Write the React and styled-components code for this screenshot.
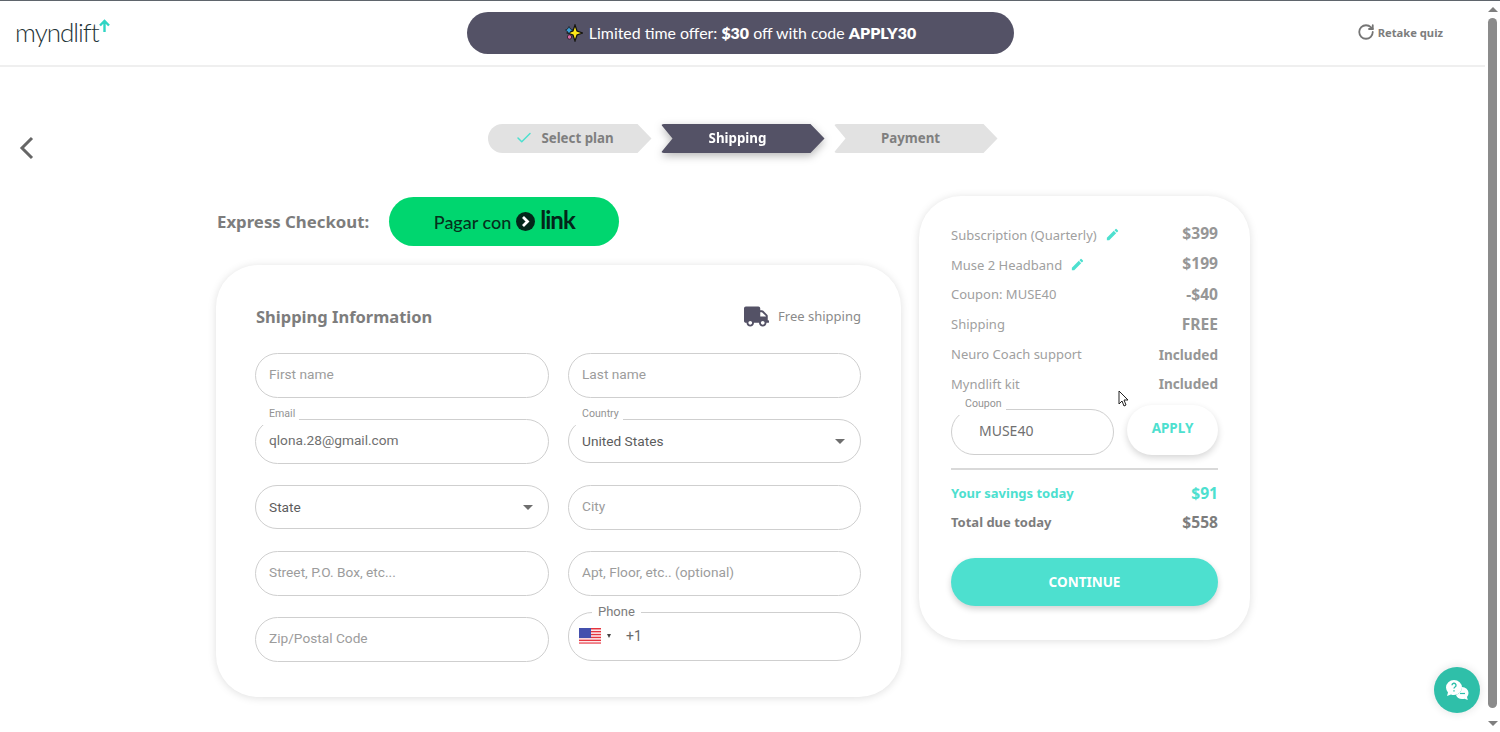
import React from "react";
import styled, { createGlobalStyle } from "styled-components";
import { Check, RotateCw } from "lucide-react";
import { FaTruck } from "react-icons/fa";
import { MdEdit } from "react-icons/md";

const UI_FONT = `"Noto Sans", Lato, sans-serif`;
const FIELD_FONT = `Roboto, "Liberation Sans", sans-serif`;

const GlobalStyle = createGlobalStyle`
  html, body {
    margin: 0;
    height: 100%;
    overflow: hidden;
    background: #fff;
  }
  * {
    box-sizing: border-box;
  }
`;

const Screen = styled.div`
  display: flex;
  height: 732px;
  border-top: 1px solid #5f656c;
  font-family: ${UI_FONT};
  position: relative;
  overflow: hidden;
`;

const Page = styled.div`
  flex: 1;
  min-width: 0;
`;

const Header = styled.header`
  height: 66px;
  border-bottom: 2px solid #efefef;
  display: grid;
  grid-template-columns: 467px 547px 1fr;
  align-items: center;
`;

const Logo = styled.div`
  display: flex;
  align-items: flex-start;
  padding-left: 15px;
  margin-top: -2px;
  color: #1f3538;
  font-family: Lato, sans-serif;
  font-size: 26px;
  font-weight: 300;
  letter-spacing: -1px;
  line-height: 30px;
`;

const LogoArrow = styled.svg`
  width: 11px;
  height: 14px;
  margin-top: 2px;
`;

const Promo = styled.div`
  height: 42px;
  margin-top: -1px;
  border-radius: 21px;
  background: #545266;
  color: #fff;
  display: flex;
  align-items: center;
  justify-content: center;
  gap: 6px;
  font-family: Lato, sans-serif;
  font-size: 15.9px;

  b {
    font-weight: 800;
  }
`;

const Retake = styled.div`
  justify-self: end;
  margin: -2px 42px 0 0;
  display: flex;
  align-items: center;
  gap: 3px;
  color: #7d7d7d;
  font-size: 11.2px;
  font-weight: 700;
`;

const StepperRow = styled.div`
  display: grid;
  grid-template-columns: 1fr auto 1fr;
  padding-top: 57px;
`;

const Back = styled.svg`
  width: 16px;
  height: 24px;
  margin: 12px 0 0 19px;
`;

const Stepper = styled.div`
  display: flex;
  gap: 9px;
`;

const StepShadow = styled.div`
  filter: ${(p) => (p.$active ? "drop-shadow(0 3px 4px rgba(0,0,0,.28))" : "none")};
`;

const Step = styled.div`
  width: 164px;
  height: 29px;
  padding: 0 10px 2px 0;
  display: flex;
  align-items: center;
  justify-content: center;
  gap: 8px;
  font-size: 13.3px;
  font-weight: 700;
  background: ${(p) => (p.$active ? "#545266" : "#e2e2e2")};
  color: ${(p) => (p.$active ? "#fff" : "#7f7f7f")};
  border-radius: ${(p) => (p.$first ? "15px 0 0 15px" : "3px 0 0 3px")};
  clip-path: ${(p) =>
    p.$first
      ? "polygon(0 0, calc(100% - 14px) 0, 100% 50%, calc(100% - 14px) 100%, 0 100%)"
      : "polygon(0 0, calc(100% - 14px) 0, 100% 50%, calc(100% - 14px) 100%, 0 100%, 12px 50%)"};
`;

const Checkout = styled.main`
  display: grid;
  grid-template-columns: 685px 331px;
  column-gap: 18px;
  align-items: start;
  padding: 36px 0 0 216px;
`;

const Express = styled.div`
  height: 49px;
  margin-top: 1px;
  display: flex;
  align-items: center;
  gap: 20px;
`;

const ExpressLabel = styled.span`
  margin-left: 1px;
  color: #7d7d7d;
  font-size: 16.8px;
  font-weight: 700;
`;

const LinkButton = styled.div`
  width: 230px;
  height: 49px;
  border-radius: 25px;
  background: #00d66f;
  color: #06301c;
  display: flex;
  align-items: center;
  justify-content: center;
  gap: 5px;
  font-family: Lato, sans-serif;
  font-size: 18px;
  font-weight: 500;
`;

const LinkWord = styled.span`
  color: #03261a;
  font-size: 24px;
  font-weight: 700;
  letter-spacing: -1px;
  line-height: 24px;
  margin-top: -3px;
`;

const Card = styled.section`
  background: #fff;
  border-radius: 42px;
  box-shadow: 0 1px 8px rgba(0, 0, 0, 0.13);
`;

const ShippingCard = styled(Card)`
  height: 432px;
  margin-top: 19px;
  padding: 39px 40px 0;
`;

const CardHead = styled.div`
  height: 24px;
  display: flex;
  justify-content: space-between;
  align-items: center;
`;

const CardTitle = styled.h2`
  margin: 0;
  color: #7d7d7d;
  font-size: 16.5px;
  font-weight: 700;
`;

const FreeShipping = styled.div`
  display: flex;
  align-items: center;
  gap: 9px;
  color: #8a8a8a;
  font-size: 13px;
`;

const FormGrid = styled.div`
  display: grid;
  grid-template-columns: 294px 293px;
  grid-auto-rows: 45px;
  column-gap: 19px;
  row-gap: 21px;
  margin: 25px 0 0 -1px;
  align-items: start;
`;

const Field = styled.div`
  position: relative;
  height: ${(p) => p.$h || 45}px;
  margin-top: ${(p) => p.$shift || 0}px;
  border: 1px solid #cfcfcf;
  border-radius: 24px;
  display: flex;
  align-items: center;
  padding: 0 13px;
  background: #fff;
`;

const Input = styled.input`
  width: 100%;
  border: 0;
  outline: 0;
  padding: 0 0 4px;
  background: transparent;
  color: #6f6f6f;
  font-family: ${FIELD_FONT};
  font-size: 13.7px;

  &::placeholder {
    color: #9c9c9c;
    opacity: 1;
  }
`;

const FloatLabel = styled.label`
  position: absolute;
  left: -1px;
  top: -13px;
  height: 18px;
  padding: 1px 4px 0 14px;
  background: #fff;
  color: #939393;
  font-family: ${FIELD_FONT};
  font-size: 10.6px;
  line-height: 11px;
`;

const PhoneLabel = styled.label`
  position: absolute;
  left: 23px;
  top: -8px;
  padding: 0 6px;
  background: #fff;
  color: #7c7c7c;
  font-family: ${FIELD_FONT};
  font-size: 13px;
  line-height: 14px;
`;

const SelectBox = styled.div`
  width: 100%;
  display: flex;
  justify-content: space-between;
  align-items: center;
  color: #5c5c5c;
  font-family: ${FIELD_FONT};
  font-size: 13.7px;
`;

const Caret = styled.span`
  width: 0;
  height: 0;
  margin-right: 2px;
  border-left: 5px solid transparent;
  border-right: 5px solid transparent;
  border-top: 5px solid #6e6e6e;
`;

const PhoneRow = styled.div`
  display: flex;
  align-items: center;
  color: #6a6a6a;
  font-family: ${FIELD_FONT};
  font-size: 14px;
  margin: 0 0 1px -3px;
`;

const MiniCaret = styled.span`
  width: 0;
  height: 0;
  margin: 0 15px 0 6px;
  border-left: 2.5px solid transparent;
  border-right: 2.5px solid transparent;
  border-top: 4px solid #444;
`;

const SummaryCard = styled(Card)`
  height: 444px;
  padding: 24px 32px 0;
`;

const Line = styled.div`
  height: 29.8px;
  display: flex;
  align-items: center;
  justify-content: space-between;
  color: #a0a0a0;
  font-size: 13px;
`;

const LineLabel = styled.span`
  display: flex;
  align-items: center;
  gap: 8px;
`;

const Amount = styled.span`
  color: #969696;
  font-size: ${(p) => (p.$word ? 13.6 : 15.6)}px;
  font-weight: 700;
  margin-top: ${(p) => (p.$raised ? -4 : 0)}px;
`;

const Pen = styled(MdEdit)`
  color: #4de0cf;
  font-size: 15px;
`;

const CouponRow = styled.div`
  display: flex;
  justify-content: space-between;
  align-items: flex-end;
  margin-top: 4px;
  height: 52px;
`;

const CouponField = styled(Field)`
  width: 163px;
  height: 46px;
  padding: 0 27px;
`;

const CouponInput = styled(Input)`
  padding-bottom: 2px;
  font-family: ${UI_FONT};
  color: #707070;
  font-size: 14px;
`;

const ApplyButton = styled.button`
  width: 91px;
  height: 50px;
  border: 0;
  border-radius: 25px;
  background: #fff;
  box-shadow: 0 3px 7px rgba(0, 0, 0, 0.16);
  color: #4de0cf;
  font-family: ${UI_FONT};
  font-size: 13.5px;
  font-weight: 700;
  padding: 0 0 4px;
`;

const Divider = styled.hr`
  height: 2px;
  margin: 13px 0 8px;
  border: 0;
  background: #d9d9d9;
`;

const TotalLine = styled(Line)`
  color: ${(p) => p.$color};
  font-weight: 700;
  font-size: 13px;

  ${Amount} {
    color: ${(p) => p.$color};
  }
`;

const ContinueButton = styled.button`
  display: block;
  width: 267px;
  height: 48px;
  margin-top: 21px;
  border: 0;
  border-radius: 24px;
  background: #4de0cf;
  box-shadow: 0 3px 6px rgba(0, 0, 0, 0.18);
  color: #fff;
  font-family: ${UI_FONT};
  font-size: 13.5px;
  font-weight: 700;
`;

const ScrollBar = styled.div`
  width: 15px;
  display: flex;
  flex-direction: column;
  align-items: center;
  background: #fff;
`;

const ScrollArrow = styled.span`
  width: 0;
  height: 0;
  margin: ${(p) => (p.$up ? "6px 0" : "13px 0 0")};
  border-left: 5px solid transparent;
  border-right: 5px solid transparent;
  ${(p) => (p.$up ? "border-bottom" : "border-top")}: 5px solid #7f7f7f;
`;

const ScrollThumb = styled.div`
  width: 9px;
  height: 690px;
  flex: none;
  border-radius: 5px;
  background: #8b8b8b;
`;

const ChatButton = styled.div`
  position: absolute;
  left: 1434px;
  top: 666px;
  width: 46px;
  height: 46px;
  border-radius: 50%;
  background: #2fbfa9;
  box-shadow: 0 0 10px rgba(0, 0, 0, 0.12);
  display: flex;
  align-items: center;
  justify-content: center;
`;

const Cursor = styled.svg`
  position: absolute;
  left: 1118px;
  top: 389px;
  width: 11px;
  height: 17px;
`;

const Sparkles = () => (
  <svg width="18" height="18" viewBox="0 0 18 18">
    <path d="M10 1 L12 7 L17.5 9 L12 11 L10 17 L8 11 L2.5 9 L8 7 Z" fill="#ffe81a" stroke="#111" strokeWidth="1.2" />
    <path d="M4 2.5 L5.5 5 L8 6 L5.5 7.5 L4 10 L2.5 7.5 L0.5 6 L2.5 5 Z" fill="#3aa0d8" stroke="#111" strokeWidth=".7" />
    <circle cx="4.5" cy="13" r="2.2" fill="#d86aa8" stroke="#111" strokeWidth=".7" />
  </svg>
);

const UsFlag = () => (
  <svg width="22" height="16" viewBox="0 0 22 16">
    <rect width="22" height="16" fill="#fff" />
    {[0, 1, 2, 3, 4, 5].map((i) => (
      <rect key={i} y={i * 2.9} width="22" height="1.5" fill="#e5343f" />
    ))}
    <rect y="14.6" width="22" height="1.4" fill="#f08089" />
    <rect width="12" height="10" fill="#4450ad" />
  </svg>
);

const ChatIcon = () => (
  <svg width="25" height="22" viewBox="0 0 25 22">
    <path d="M9 1a8 7.5 0 0 1 8 7.5 8 7.5 0 0 1-8 7.5 8 8 0 0 1-3-.5L2 17l1-3.6A7.5 7.5 0 0 1 1 8.5 8 7.5 0 0 1 9 1z" fill="#fff" />
    <path d="M17 8a6.5 6 0 0 1 6.5 6 6 6 0 0 1-1.5 4l.8 3-3.3-1.3a7 7 0 0 1-2.5.3 6.5 6 0 0 1-6-4 9 9 0 0 0 6-8z" fill="#fff" />
    <path d="M7 6.3a2 2 0 1 1 3 1.7c-.7.4-1 .8-1 1.5M9 11.2v1.2" fill="none" stroke="#2fbfa9" strokeWidth="1.4" />
    <path d="M15 14.5h5" stroke="#2fbfa9" strokeWidth="1.2" />
  </svg>
);

const items = [
  { label: "Subscription (Quarterly)", value: "$399", edit: true },
  { label: "Muse 2 Headband", value: "$199", edit: true },
  { label: "Coupon: MUSE40", value: "-$40" },
  { label: "Shipping", value: "FREE" },
  { label: "Neuro Coach support", value: "Included" },
  { label: "Myndlift kit", value: "Included" },
];

export default function App() {
  return (
    <>
      <GlobalStyle />
      <Screen>
        <Page>
          <Header>
            <Logo>
              myndlift
              <LogoArrow viewBox="0 0 11 14">
                <path d="M5.5 13V2M1 6.5l4.5-4.5L10 6.5" fill="none" stroke="#2fd5c4" strokeWidth="2.4" />
              </LogoArrow>
            </Logo>
            <Promo>
              <Sparkles />
              <span>
                Limited time offer: <b>$30</b> off with code <b>APPLY30</b>
              </span>
            </Promo>
            <Retake>
              <RotateCw size={18} color="#757575" strokeWidth={2.4} />
              Retake quiz
            </Retake>
          </Header>

          <StepperRow>
            <Back viewBox="0 0 16 24">
              <path d="M13 2 L3 12 L13 22" fill="none" stroke="#666" strokeWidth="3" />
            </Back>
            <Stepper>
              <StepShadow>
                <Step $first>
                  <Check size={18} color="#4de0cf" strokeWidth={2} />
                  Select plan
                </Step>
              </StepShadow>
              <StepShadow $active>
                <Step $active>Shipping</Step>
              </StepShadow>
              <StepShadow>
                <Step>Payment</Step>
              </StepShadow>
            </Stepper>
          </StepperRow>

          <Checkout>
            <div>
              <Express>
                <ExpressLabel>Express Checkout:</ExpressLabel>
                <LinkButton>
                  Pagar con
                  <svg width="19" height="19" viewBox="0 0 19 19">
                    <circle cx="9.5" cy="9.5" r="9.5" fill="#03261a" />
                    <path d="M7 5l4.5 4.5L7 14" fill="none" stroke="#fff" strokeWidth="2.8" />
                  </svg>
                  <LinkWord>link</LinkWord>
                </LinkButton>
              </Express>

              <ShippingCard>
                <CardHead>
                  <CardTitle>Shipping Information</CardTitle>
                  <FreeShipping>
                    <FaTruck size={25} color="#545266" />
                    Free shipping
                  </FreeShipping>
                </CardHead>
                <FormGrid>
                  <Field>
                    <Input placeholder="First name" />
                  </Field>
                  <Field>
                    <Input placeholder="Last name" />
                  </Field>
                  <Field>
                    <FloatLabel>Email</FloatLabel>
                    <Input defaultValue="qlona.28@gmail.com" />
                  </Field>
                  <Field $h={44}>
                    <FloatLabel>Country</FloatLabel>
                    <SelectBox>
                      United States
                      <Caret />
                    </SelectBox>
                  </Field>
                  <Field $h={44}>
                    <SelectBox>
                      State
                      <Caret />
                    </SelectBox>
                  </Field>
                  <Field>
                    <Input placeholder="City" />
                  </Field>
                  <Field>
                    <Input placeholder="Street, P.O. Box, etc..." />
                  </Field>
                  <Field>
                    <Input placeholder="Apt, Floor, etc.. (optional)" />
                  </Field>
                  <Field>
                    <Input placeholder="Zip/Postal Code" />
                  </Field>
                  <Field $h={49} $shift={-5}>
                    <PhoneLabel>Phone</PhoneLabel>
                    <PhoneRow>
                      <UsFlag />
                      <MiniCaret />
                      +1
                    </PhoneRow>
                  </Field>
                </FormGrid>
              </ShippingCard>
            </div>

            <SummaryCard>
              {items.map((item, i) => (
                <Line key={item.label}>
                  <LineLabel>
                    {item.label}
                    {item.edit && <Pen />}
                  </LineLabel>
                  <Amount $raised={i < 2} $word={item.value === "Included"}>
                    {item.value}
                  </Amount>
                </Line>
              ))}
              <CouponRow>
                <CouponField>
                  <FloatLabel>Coupon</FloatLabel>
                  <CouponInput defaultValue="MUSE40" />
                </CouponField>
                <ApplyButton>APPLY</ApplyButton>
              </CouponRow>
              <Divider />
              <TotalLine $color="#4de0cf">
                Your savings today
                <Amount>$91</Amount>
              </TotalLine>
              <TotalLine $color="#7d7d7d">
                Total due today
                <Amount>$558</Amount>
              </TotalLine>
              <ContinueButton>CONTINUE</ContinueButton>
            </SummaryCard>
          </Checkout>
        </Page>

        <ScrollBar>
          <ScrollArrow $up />
          <ScrollThumb />
          <ScrollArrow />
        </ScrollBar>

        <ChatButton>
          <ChatIcon />
        </ChatButton>
        <Cursor viewBox="0 0 11 17">
          <path d="M1 1v13l3-3 2 5 2-1-2-5h4z" fill="#fff" stroke="#222" strokeWidth="1" />
        </Cursor>
      </Screen>
    </>
  );
}
